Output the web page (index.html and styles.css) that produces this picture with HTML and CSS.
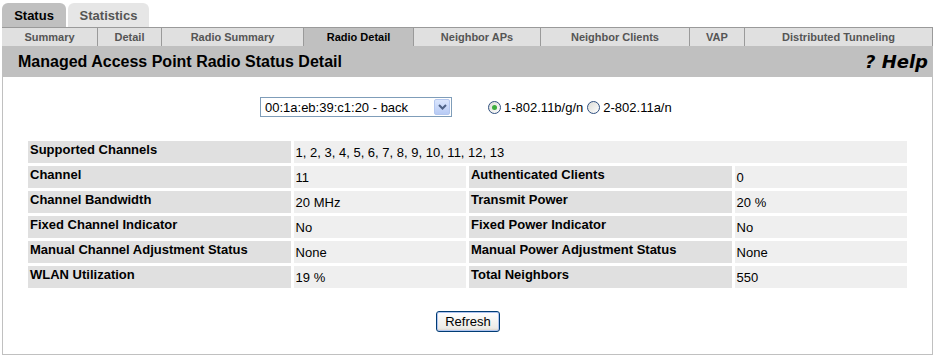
FILE: index.html
```html
<!DOCTYPE html>
<html lang="en">
<head>
  <meta charset="UTF-8" />
  <title>Managed Access Point Radio Status Detail</title>
  <link rel="stylesheet" href="styles.css">
</head>
<body>
  <div class="page">
    <div class="main-tabs">
      <span class="main-tab active">Status</span>
      <span class="main-tab">Statistics</span>
    </div>

    <div class="sub-tabs">
      <span class="sub-tab w-summary">Summary</span>
      <span class="sub-tab w-detail">Detail</span>
      <span class="sub-tab w-rsum">Radio Summary</span>
      <span class="sub-tab w-rdet active">Radio Detail</span>
      <span class="sub-tab w-naps">Neighbor APs</span>
      <span class="sub-tab w-ncli">Neighbor Clients</span>
      <span class="sub-tab w-vap">VAP</span>
      <span class="sub-tab w-dist">Distributed Tunneling</span>
    </div>

    <div class="title-bar">
      <h1>Managed Access Point Radio Status Detail</h1>
      <span class="help">? Help</span>
    </div>

    <div class="panel">
      <div class="chooser">
        <div class="select-box">
          <span class="select-text">00:1a:eb:39:c1:20 - back</span>
          <span class="select-btn">
            <svg width="9" height="6" viewBox="0 0 9 6"><path d="M1 1 L4.5 4.5 L8 1" fill="none" stroke="#4d6185" stroke-width="2"/></svg>
          </span>
        </div>
        <label class="radio-opt"><span class="radio checked"></span>1-802.11b/g/n</label>
        <label class="radio-opt"><span class="radio"></span>2-802.11a/n</label>
      </div>

      <table class="detail">
        <tr>
          <td class="lbl">Supported Channels</td>
          <td class="val" colspan="3">1, 2, 3, 4, 5, 6, 7, 8, 9, 10, 11, 12, 13</td>
        </tr>
        <tr>
          <td class="lbl">Channel</td>
          <td class="val">11</td>
          <td class="lbl">Authenticated Clients</td>
          <td class="val">0</td>
        </tr>
        <tr>
          <td class="lbl">Channel Bandwidth</td>
          <td class="val">20 MHz</td>
          <td class="lbl">Transmit Power</td>
          <td class="val">20 %</td>
        </tr>
        <tr>
          <td class="lbl">Fixed Channel Indicator</td>
          <td class="val">No</td>
          <td class="lbl">Fixed Power Indicator</td>
          <td class="val">No</td>
        </tr>
        <tr>
          <td class="lbl">Manual Channel Adjustment Status</td>
          <td class="val">None</td>
          <td class="lbl">Manual Power Adjustment Status</td>
          <td class="val">None</td>
        </tr>
        <tr>
          <td class="lbl">WLAN Utilization</td>
          <td class="val">19 %</td>
          <td class="lbl">Total Neighbors</td>
          <td class="val">550</td>
        </tr>
      </table>

      <div class="actions">
        <button class="refresh">Refresh</button>
      </div>
    </div>
  </div>
</body>
</html>
```

FILE: styles.css
```css
body {
  margin: 0;
  font-family: "Liberation Sans", Arial, sans-serif;
  font-size: 12px;
  color: #000;
  background: #fff;
}

.page {
  width: 931px;
  margin-left: 2px;
}

/* top tabs */
.main-tabs {
  display: flex;
  gap: 2px;
  padding-top: 3px;
  height: 24px;
}

.main-tab {
  display: flex;
  align-items: center;
  justify-content: center;
  height: 24px;
  font-size: 13px;
  font-weight: bold;
  color: #555;
  background: #e6e6e6;
  border-radius: 6px 6px 0 0;
  width: 81px;
}

.main-tab.active {
  width: 64px;
  color: #000;
  background: #c0c0c0;
}

/* sub tabs */
.sub-tabs {
  display: flex;
  height: 18px;
  border-top: 1px solid #9a9a9a;
  border-right: 1px solid #9a9a9a;
  background: #e0e0e0;
}

.sub-tab {
  display: flex;
  align-items: center;
  justify-content: center;
  font-size: 11px;
  font-weight: bold;
  color: #555;
  border-right: 1px solid #9a9a9a;
  box-sizing: border-box;
}

.sub-tab:last-child { border-right: none; }

.sub-tab.active {
  color: #000;
  background: #c0c0c0;
}

.w-summary { width: 96px; }
.w-detail { width: 64px; }
.w-rsum { width: 142px; }
.w-rdet { width: 110px; }
.w-naps { width: 127px; }
.w-ncli { width: 149px; }
.w-vap { width: 55px; }
.w-dist { flex: 1; }

/* title bar */
.title-bar {
  display: flex;
  align-items: center;
  justify-content: space-between;
  height: 31px;
  background: #c0c0c0;
  padding: 0 5px 0 16px;
}

h1 {
  margin: 0;
  font-size: 16px;
  font-weight: bold;
}

.help {
  font-family: "DejaVu Sans", "Liberation Sans", sans-serif;
  font-size: 18px;
  font-weight: bold;
  font-style: italic;
}

/* panel */
.panel {
  border: 1px solid #c0c0c0;
  border-top: none;
  height: 278px;
  box-sizing: border-box;
}

.chooser {
  display: flex;
  align-items: center;
  padding: 19px 0 0 257px;
  height: 22px;
}

.select-box {
  display: flex;
  align-items: center;
  justify-content: space-between;
  width: 192px;
  height: 20px;
  box-sizing: border-box;
  border: 1px solid #7f9db9;
  padding: 0 1px 0 4px;
  font-size: 13px;
  margin-right: 36px;
}

.select-btn {
  display: flex;
  align-items: center;
  justify-content: center;
  width: 16px;
  height: 16px;
  background: linear-gradient(#dbe6fd, #b8cbf5);
  border: 1px solid #b4c7ef;
  border-radius: 2px;
  box-sizing: border-box;
}

.radio-opt {
  display: flex;
  align-items: center;
  font-size: 13px;
  margin-right: 4px;
}

.radio {
  width: 11px;
  height: 11px;
  border: 1px solid #2f4f80;
  border-radius: 50%;
  background: linear-gradient(135deg, #dcdcd6, #fff);
  margin-right: 3px;
  position: relative;
}

.radio.checked::after {
  content: "";
  position: absolute;
  left: 3px;
  top: 3px;
  width: 5px;
  height: 5px;
  border-radius: 50%;
  background: #3dad3d;
}

/* detail table */
.detail {
  border-spacing: 3px;
  margin: 20px 0 0 22px;
  width: 885px;
  font-size: 13px;
}

.detail td {
  height: 18px;
  padding: 1px 2px 3px;
  vertical-align: top;
}

.detail .lbl {
  font-weight: bold;
  background: #e0e0e0;
  width: 258px;
}

.detail .val {
  background: #efefef;
  padding-top: 4px;
  padding-bottom: 0;
  width: 168px;
}

.actions {
  text-align: center;
  margin-top: 20px;
}

.refresh {
  font-family: "Liberation Sans", Arial, sans-serif;
  font-size: 13px;
  width: 64px;
  height: 21px;
  padding: 0;
  border: 1px solid #003c74;
  border-radius: 3px;
  background: linear-gradient(#fff, #ecebe6 85%, #d6d0c5);
  box-shadow: inset 0 0 0 1px #b0c4ef;
  margin-left: 1px;
}
```
